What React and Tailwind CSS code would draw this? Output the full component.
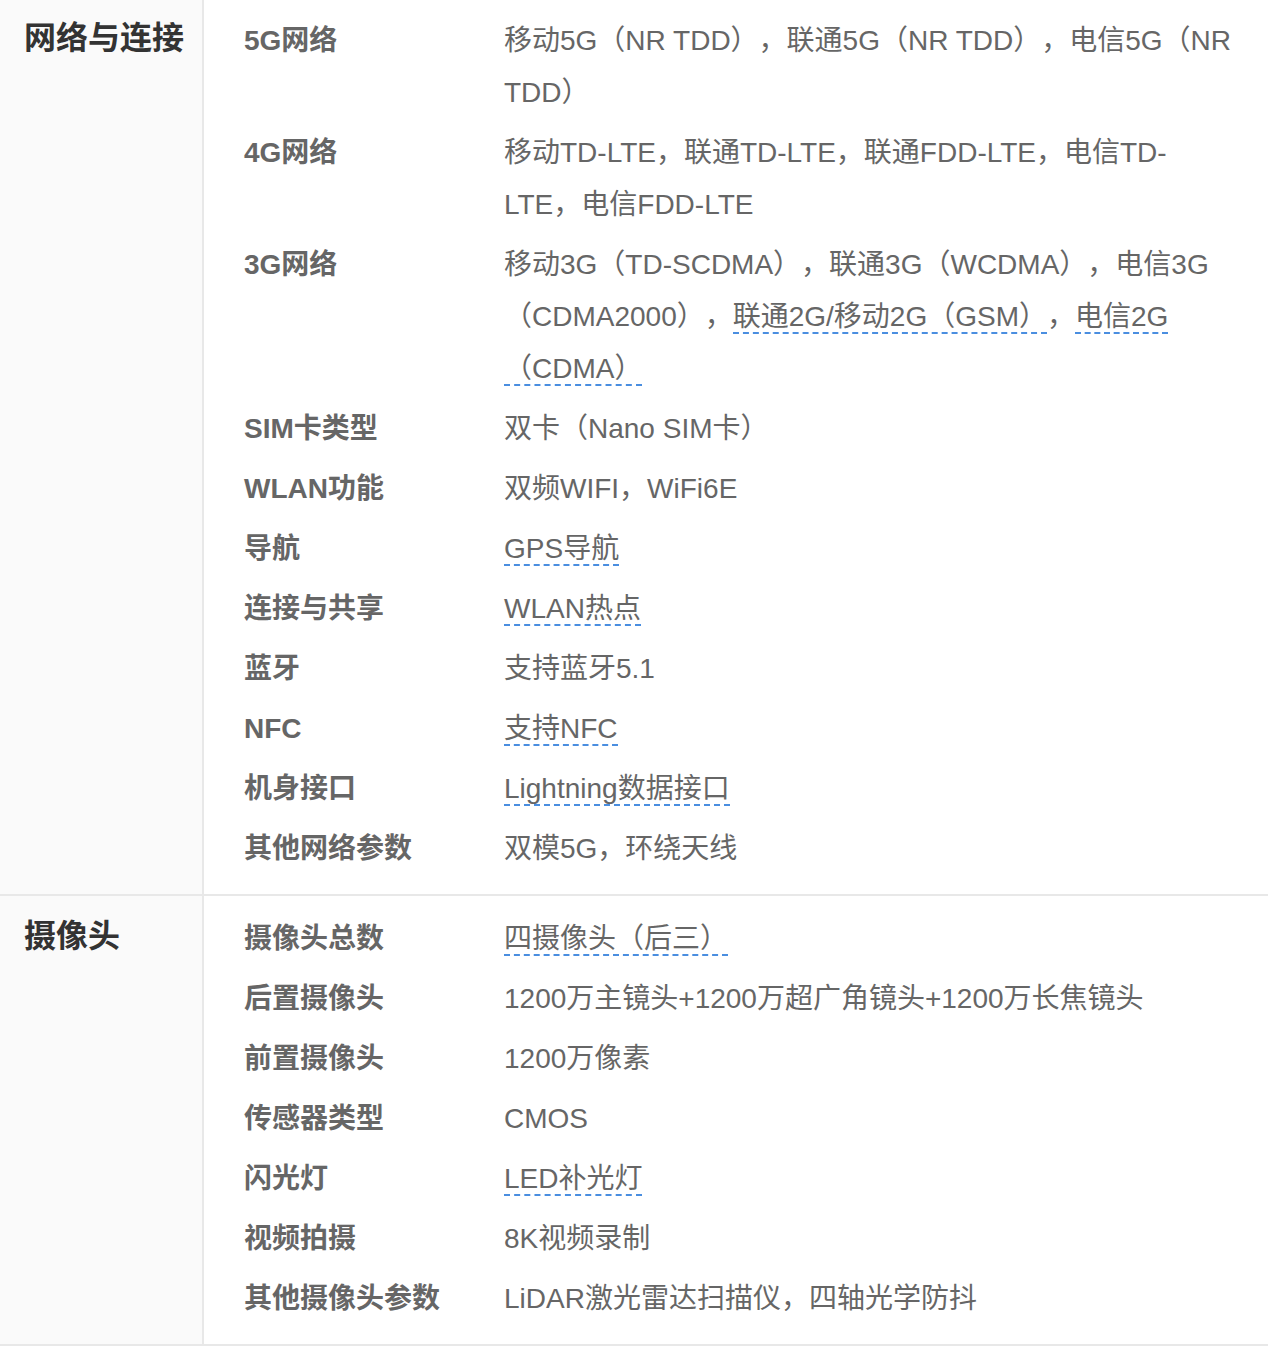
import React from 'react';

const Link = ({ children }) => (
  <span className="border-b-2 border-dashed border-[#4a8ee0]">{children}</span>
);

const sections = [
  {
    title: '网络与连接',
    first: true,
    rows: [
      {
        label: '5G网络',
        value: (
          <>
            移动5G（NR TDD），联通5G（NR TDD），电信5G（NR
            <br />
            TDD）
          </>
        ),
      },
      {
        label: '4G网络',
        value: (
          <>
            移动TD-LTE，联通TD-LTE，联通FDD-LTE，电信TD-
            <br />
            LTE，电信FDD-LTE
          </>
        ),
      },
      {
        label: '3G网络',
        value: (
          <>
            移动3G（TD-SCDMA），联通3G（WCDMA），电信3G
            <br />
            （CDMA2000），<Link>联通2G/移动2G（GSM）</Link>，<Link>电信2G<br />（CDMA）</Link>
          </>
        ),
      },
      { label: 'SIM卡类型', value: '双卡（Nano SIM卡）' },
      { label: 'WLAN功能', value: '双频WIFI，WiFi6E' },
      { label: '导航', value: <Link>GPS导航</Link> },
      { label: '连接与共享', value: <Link>WLAN热点</Link> },
      { label: '蓝牙', value: '支持蓝牙5.1' },
      { label: 'NFC', value: <Link>支持NFC</Link> },
      { label: '机身接口', value: <Link>Lightning数据接口</Link> },
      { label: '其他网络参数', value: '双模5G，环绕天线' },
    ],
  },
  {
    title: '摄像头',
    rows: [
      { label: '摄像头总数', value: <Link>四摄像头（后三）</Link> },
      { label: '后置摄像头', value: '1200万主镜头+1200万超广角镜头+1200万长焦镜头' },
      { label: '前置摄像头', value: '1200万像素' },
      { label: '传感器类型', value: 'CMOS' },
      { label: '闪光灯', value: <Link>LED补光灯</Link> },
      { label: '视频拍摄', value: '8K视频录制' },
      { label: '其他摄像头参数', value: 'LiDAR激光雷达扫描仪，四轴光学防抖' },
    ],
  },
];

export default function App() {
  return (
    <div className="w-[1268px] min-h-[1348px] bg-white overflow-hidden font-['Liberation_Sans','Noto_Sans_CJK_SC',sans-serif] [text-spacing-trim:space-all]">
      {sections.map((s) => (
        <div key={s.title} className="flex border-b-2 border-[#e8e8e8]">
          <div className={`w-[204px] shrink-0 bg-[#fafafa] border-r-2 border-[#e8e8e8] pl-6 ${s.first ? 'pt-[12px]' : 'pt-[14px]'}`}>
            <h2 className="text-[32px] leading-[52px] font-bold text-[#333]">{s.title}</h2>
          </div>
          <div className={`flex-1 pl-10 pb-[15px] ${s.first ? 'pt-[11px]' : 'pt-[13px]'}`}>
            {s.rows.map((r) => (
              <div key={r.label} className="flex py-1 text-[28px] leading-[52px] text-[#666]">
                <div className="w-[260px] shrink-0 font-bold">{r.label}</div>
                <div className="flex-1 whitespace-nowrap">{r.value}</div>
              </div>
            ))}
          </div>
        </div>
      ))}
    </div>
  );
}
